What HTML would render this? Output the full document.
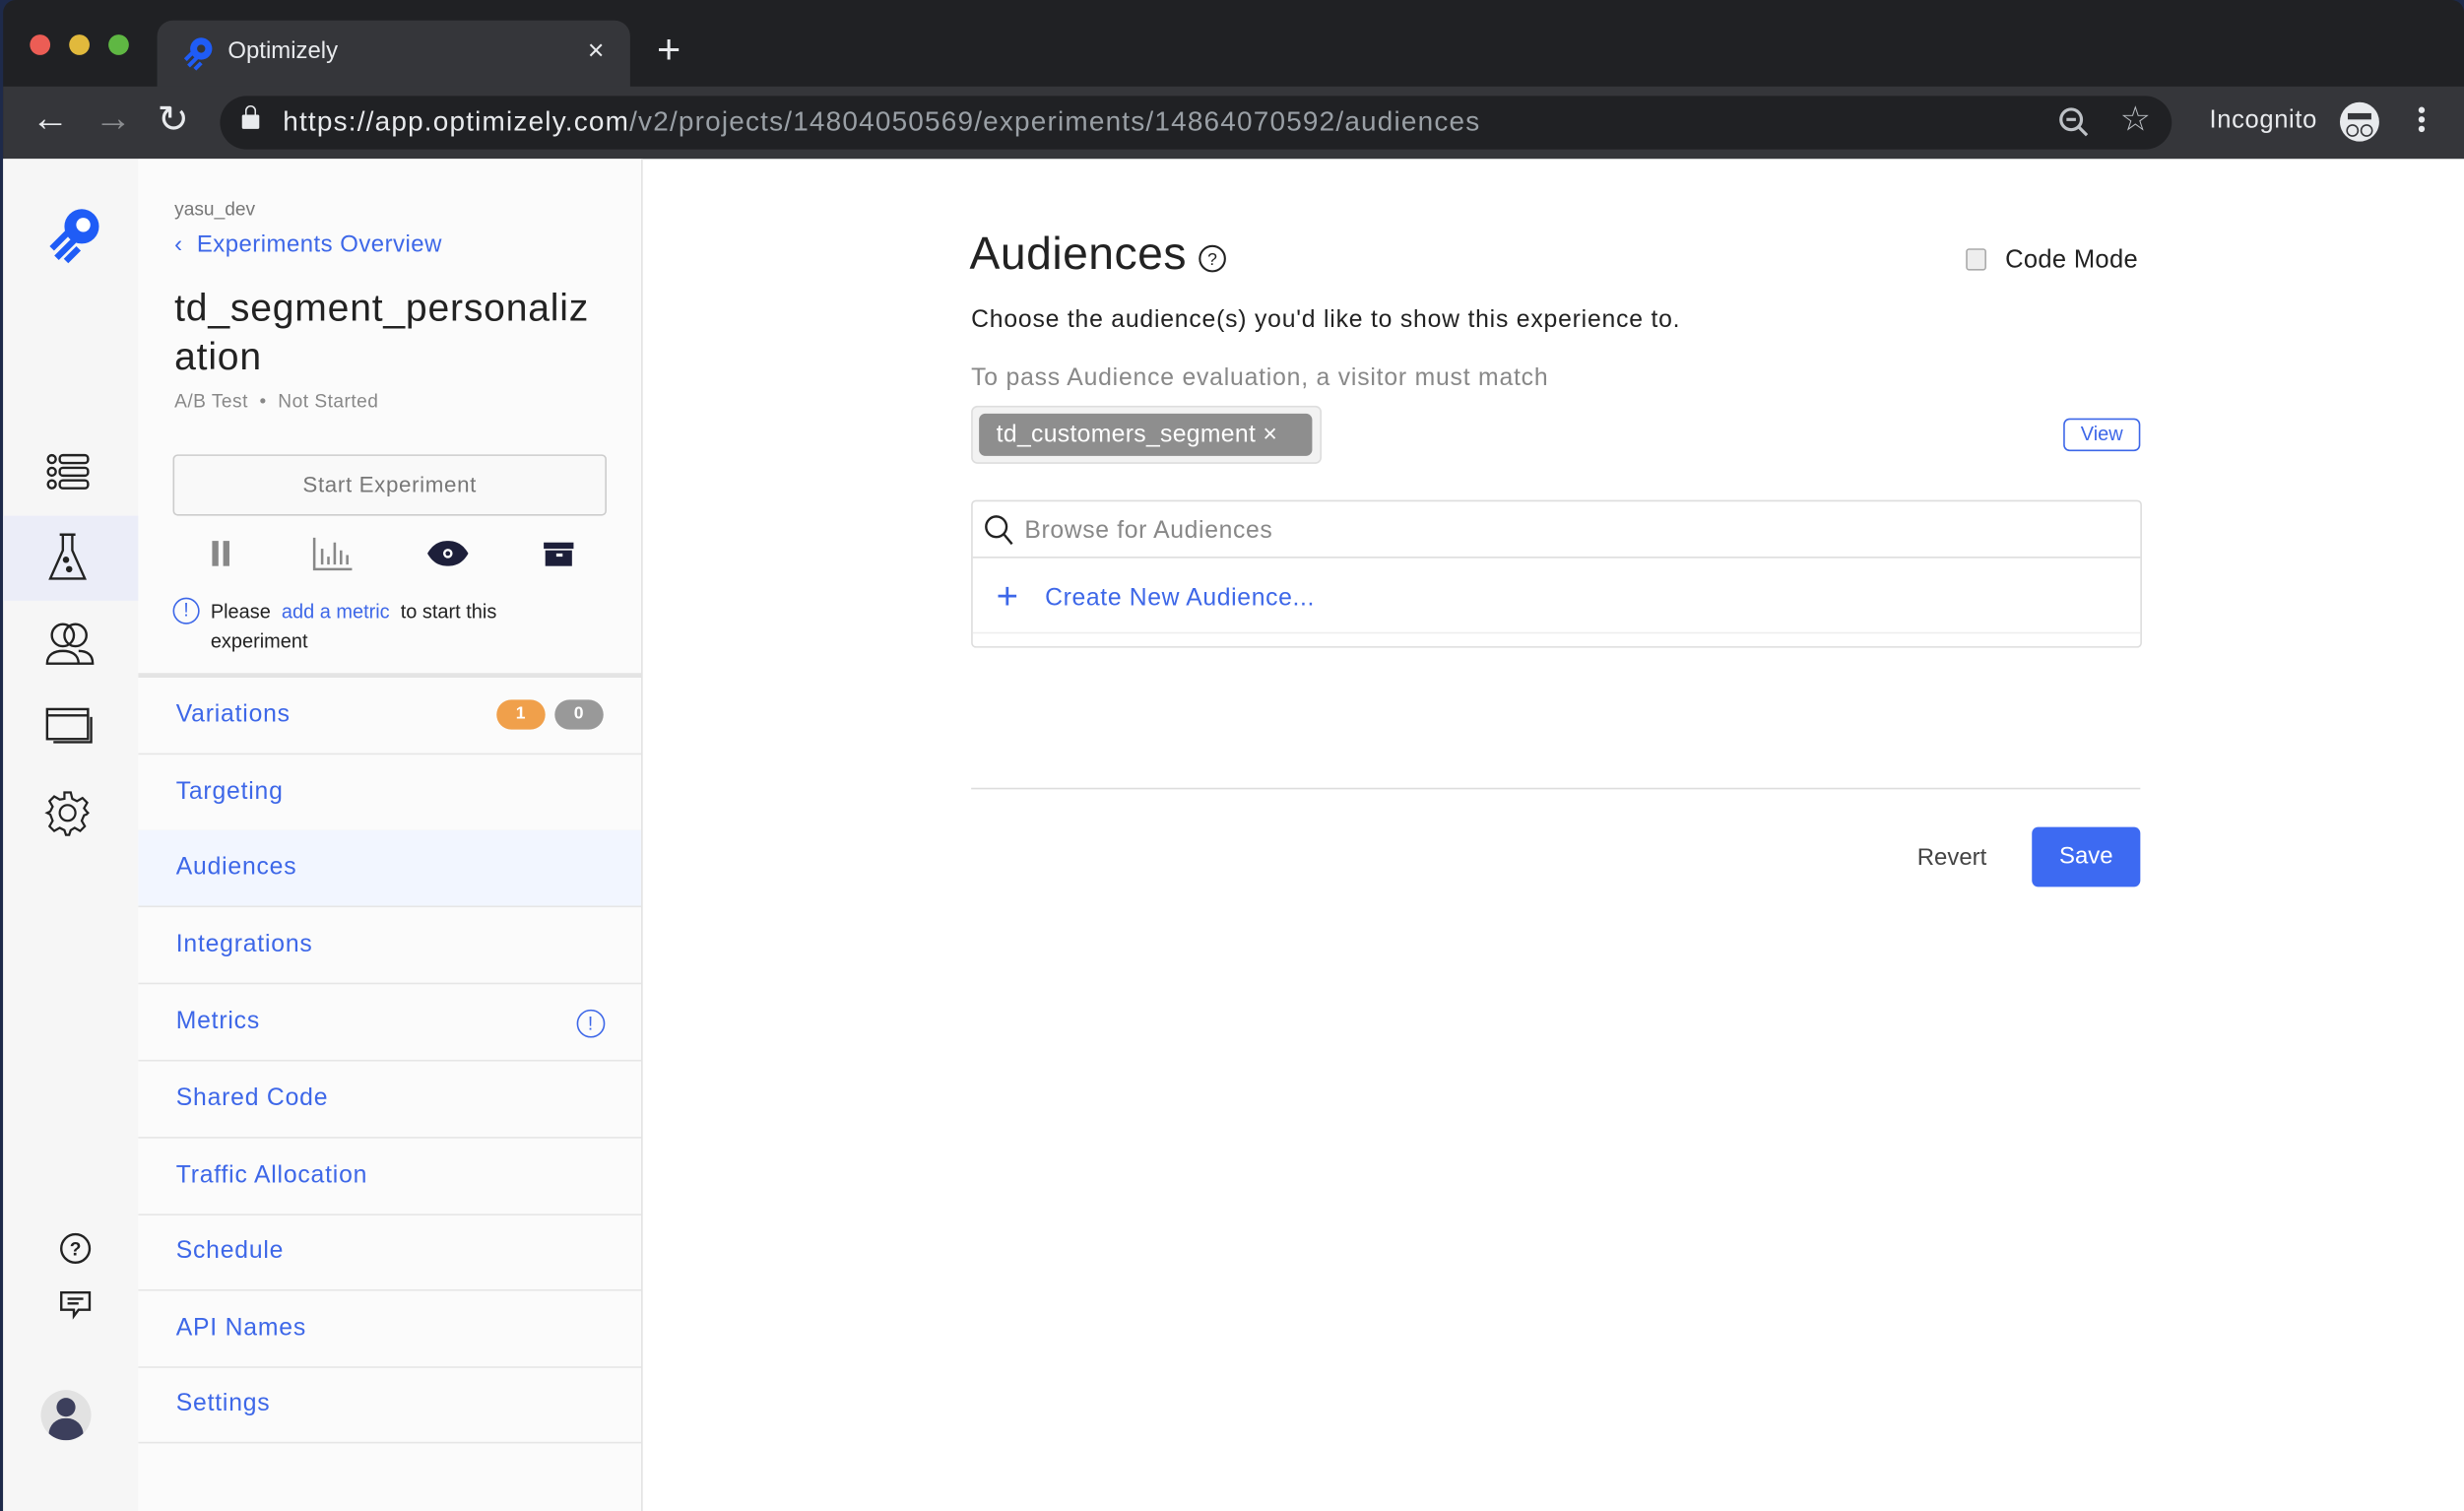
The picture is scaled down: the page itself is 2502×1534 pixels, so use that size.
<!DOCTYPE html>
<html><head><meta charset="utf-8"><style>
html,body{margin:0;padding:0;width:2502px;height:1534px;overflow:hidden;background:#1e2a4a}
#w{position:absolute;left:0;top:0;width:1568px;height:961px;transform:scale(1.5957,1.5963);transform-origin:0 0;font-family:"Liberation Sans",sans-serif}
.a{position:absolute}
.nav{position:absolute;left:88px;width:320px;height:48px;border-bottom:1px solid #e6e6e6;font-size:15.5px;color:#3d67e8;letter-spacing:.5px}
.nav span{position:absolute;left:24px;top:15px}
</style></head><body><div id="w">
<div class="a" style="left:2px;top:0;width:1566px;height:961px;background:#202124;border-radius:8px 8px 0 0"></div>
<div class="a" style="left:19px;top:22px;width:13px;height:13px;border-radius:50%;background:#ec5d55"></div>
<div class="a" style="left:44px;top:22px;width:13px;height:13px;border-radius:50%;background:#e1b93c"></div>
<div class="a" style="left:69px;top:22px;width:13px;height:13px;border-radius:50%;background:#5fb743"></div>
<div class="a" style="left:100px;top:13px;width:301px;height:43px;background:#35363a;border-radius:10px 10px 0 0"></div>
<svg class="a" style="left:114px;top:22px" width="24" height="24" viewBox="0 0 24 24"><circle cx="14" cy="9" r="7" fill="#1f5cf6"/><circle cx="14" cy="9" r="2.6" fill="#35363a"/><path d="M4 16l6-6M6 20l6-6M10 22l4-4" stroke="#1f5cf6" stroke-width="2.5"/></svg>
<div class="a" style="left:145px;top:24px;color:#e8eaed;font-size:15px">Optimizely</div>
<div class="a" style="left:374px;top:22px;color:#e8eaed;font-size:18px">×</div>
<div class="a" style="left:418px;top:16px;color:#e8eaed;font-size:26px;font-weight:300">+</div>
<div class="a" style="left:2px;top:55px;width:1566px;height:46px;background:#35363a"></div>
<div class="a" style="left:20px;top:62px;color:#e8eaed;font-size:24px">←</div>
<div class="a" style="left:60px;top:62px;color:#8a8c8f;font-size:24px">→</div>
<div class="a" style="left:100px;top:62px;color:#e8eaed;font-size:24px">↻</div>
<div class="a" style="left:140px;top:61px;width:1242px;height:34px;background:#202124;border-radius:17px"></div>
<div class="a" style="left:154px;top:73px;width:11px;height:9px;background:#e8eaed;border-radius:1px"></div>
<div class="a" style="left:156px;top:67px;width:5px;height:6px;border:1.5px solid #e8eaed;border-bottom:none;border-radius:4px 4px 0 0"></div>
<div class="a" style="left:180px;top:67px;font-size:17.5px;letter-spacing:.75px;color:#e8eaed;white-space:nowrap">https://app.optimizely.com<span style="color:#9aa0a6">/v2/projects/14804050569/experiments/14864070592/audiences</span></div>
<svg class="a" style="left:1309px;top:67px" width="22" height="22" viewBox="0 0 22 22"><circle cx="9" cy="9" r="6.5" fill="none" stroke="#bdc1c6" stroke-width="2"/><path d="M6 9h6M14 14l5 5" stroke="#bdc1c6" stroke-width="2"/></svg>
<div class="a" style="left:1349px;top:63px;color:#bdc1c6;font-size:22px">☆</div>
<div class="a" style="left:1406px;top:68px;color:#e8eaed;font-size:16px;letter-spacing:.4px">Incognito</div>
<div class="a" style="left:1489px;top:65px;width:25px;height:25px;border-radius:50%;background:#e8eaed"></div>
<div class="a" style="left:1494px;top:72px;width:15px;height:4px;background:#35363a"></div>
<div class="a" style="left:1493px;top:79px;width:6px;height:6px;border:1.5px solid #35363a;border-radius:50%"></div>
<div class="a" style="left:1502px;top:79px;width:6px;height:6px;border:1.5px solid #35363a;border-radius:50%"></div>
<div class="a" style="left:1539px;top:68px;width:4px;height:4px;border-radius:50%;background:#e8eaed;box-shadow:0 6px 0 #e8eaed,0 12px 0 #e8eaed"></div>
<div class="a" style="left:2px;top:101px;width:1566px;height:860px;background:#fff"></div>
<div class="a" style="left:2px;top:101px;width:86px;height:860px;background:#f6f6f6"></div>
<div class="a" style="left:2px;top:328px;width:86px;height:54px;background:#ebedf8"></div>
<div class="a" style="left:88px;top:101px;width:320px;height:860px;background:#fbfbfb;border-right:1px solid #e2e2e2"></div>
<svg class="a" style="left:28px;top:128px" width="40" height="40" viewBox="0 0 40 40"><circle cx="24" cy="16" r="11" fill="#1f5cf6"/><circle cx="25" cy="15" r="4.5" fill="#fff"/><path d="M5 30l10-10M8 36l11-11M14 38l8-8" stroke="#1f5cf6" stroke-width="4"/></svg>
<svg class="a" style="left:28px;top:286px" width="30" height="30" viewBox="0 0 30 30" fill="none" stroke="#222" stroke-width="1.5"><circle cx="5" cy="6" r="2.5"/><circle cx="5" cy="14" r="2.5"/><circle cx="5" cy="22" r="2.5"/><rect x="10" y="3.5" width="18" height="5" rx="2"/><rect x="10" y="11.5" width="18" height="5" rx="2"/><rect x="10" y="19.5" width="18" height="5" rx="2"/></svg>
<svg class="a" style="left:30px;top:338px" width="26" height="34" viewBox="0 0 26 34" fill="none" stroke="#222" stroke-width="1.5"><path d="M8 2h10M10 2v10L2 30h22L16 12V2"/><circle cx="12" cy="18" r="1.3" fill="#222"/><circle cx="14" cy="24" r="1.3" fill="#222"/></svg>
<svg class="a" style="left:28px;top:394px" width="32" height="30" viewBox="0 0 32 30" fill="none" stroke="#222" stroke-width="1.5"><circle cx="12" cy="10" r="7"/><circle cx="20" cy="10" r="7"/><path d="M2 28c0-6 5-8 10-8s10 2 10 8zM22 20c5 0 9 2 9 8h-9"/></svg>
<svg class="a" style="left:28px;top:448px" width="32" height="26" viewBox="0 0 32 26" fill="none" stroke="#222" stroke-width="1.5"><rect x="2" y="3" width="26" height="19"/><path d="M2 7h26M30 8v16H6"/></svg>
<svg class="a" style="left:28px;top:502px" width="30" height="30" viewBox="0 0 30 30" fill="none" stroke="#222" stroke-width="1.4"><circle cx="15" cy="15" r="5"/><path d="M13 2h4l1 4 3 1.5 3.5-2 3 3-2 3.5L27 14l1 1v0l-1 1-1.5 0.5L24 20l2 3.5-3 3-3.5-2L17 26l-1 3h-2l-1-3-3-1.5-3.5 2-3-3 2-3.5L4 16l-2-1 2-1 1.5-3-2-3.5 3-3 3.5 2L13 6z"/></svg>
<svg class="a" style="left:37px;top:783px" width="22" height="22" viewBox="0 0 22 22"><circle cx="11" cy="11" r="9" fill="none" stroke="#222" stroke-width="1.5"/><text x="11" y="15.5" text-anchor="middle" font-size="12" font-weight="bold" font-family="Liberation Sans" fill="#222">?</text></svg>
<svg class="a" style="left:37px;top:820px" width="22" height="20" viewBox="0 0 22 20" fill="none" stroke="#222" stroke-width="1.5"><path d="M2 2h18v11H13l-3 4v-4H2z"/><path d="M6 6h10M6 9h7"/></svg>
<div class="a" style="left:26px;top:884px;width:32px;height:32px;border-radius:50%;background:#e2e2e2;overflow:hidden"><div class="a" style="left:10px;top:5px;width:12px;height:12px;border-radius:50%;background:#3c3f5c"></div><div class="a" style="left:5px;top:18px;width:22px;height:14px;border-radius:11px 11px 4px 4px;background:#3c3f5c"></div></div>
<div class="a" style="left:111px;top:126px;font-size:12px;color:#777">yasu_dev</div>
<div class="a" style="left:111px;top:147px;font-size:15px;color:#3d67e8;letter-spacing:.3px">‹&nbsp; Experiments Overview</div>
<div class="a" style="left:111px;top:181px;font-size:24.5px;color:#222;line-height:31px;width:300px;letter-spacing:.5px">td_segment_personaliz<br>ation</div>
<div class="a" style="left:111px;top:248px;font-size:12px;color:#888;letter-spacing:.3px">A/B Test &nbsp;•&nbsp; Not Started</div>
<div class="a" style="left:110px;top:289px;width:274px;height:37px;border:1px solid #ccc;border-radius:3px;background:#f9f9f9;text-align:center;line-height:37px;font-size:14px;color:#777;letter-spacing:.4px">Start Experiment</div>
<div class="a" style="left:135px;top:344px;width:4px;height:16px;background:#888;box-shadow:7px 0 0 #888"></div>
<svg class="a" style="left:198px;top:341px" width="28" height="22" viewBox="0 0 28 22" fill="none" stroke="#888" stroke-width="1.6"><path d="M2 1v20h24M7 8v10M11 13v5M15 4v14M19 9v9M23 12v6"/></svg>
<svg class="a" style="left:271px;top:343px" width="28" height="18" viewBox="0 0 28 18"><path d="M1 9C5 2 10 1 14 1s9 1 13 8c-4 7-9 8-13 8S5 16 1 9z" fill="#1d1f3a"/><circle cx="14" cy="9" r="3" fill="#fff"/><circle cx="14" cy="9" r="1.5" fill="#1d1f3a"/></svg>
<div class="a" style="left:346px;top:345px;width:19px;height:4px;background:#1d1f3a"></div>
<div class="a" style="left:347px;top:350px;width:17px;height:10px;background:#1d1f3a"></div>
<div class="a" style="left:354px;top:352px;width:4px;height:1.5px;background:#fff"></div>
<div class="a" style="left:110px;top:380px;width:15px;height:15px;border:1.3px solid #3d67e8;border-radius:50%;color:#3d67e8;font-size:12px;text-align:center;line-height:15px">!</div>
<div class="a" style="left:134px;top:380px;font-size:12.5px;color:#222;line-height:19px">Please &nbsp;<span style="color:#3d67e8">add a metric</span>&nbsp; to start this<br>experiment</div>
<div class="a" style="left:88px;top:428px;width:320px;height:3px;background:#e4e4e4"></div>
<div class="nav" style="top:431px"><span>Variations</span><div class="a" style="left:228px;top:14px;width:31px;height:19px;border-radius:10px;background:#f0a04b;color:#fff;font-size:11px;font-weight:bold;text-align:center;line-height:19px">1</div><div class="a" style="left:265px;top:14px;width:31px;height:19px;border-radius:10px;background:#999;color:#fff;font-size:11px;font-weight:bold;text-align:center;line-height:19px">0</div></div>
<div class="nav" style="top:480px"><span>Targeting</span></div>
<div class="nav" style="top:528px;background:#f2f6ff"><span>Audiences</span></div>
<div class="nav" style="top:577px"><span>Integrations</span></div>
<div class="nav" style="top:626px"><span>Metrics</span><div class="a" style="left:279px;top:16px;width:16px;height:16px;border:1.3px solid #3d67e8;border-radius:50%;font-size:12px;text-align:center;line-height:16px">!</div></div>
<div class="nav" style="top:675px"><span>Shared Code</span></div>
<div class="nav" style="top:724px"><span>Traffic Allocation</span></div>
<div class="nav" style="top:772px"><span>Schedule</span></div>
<div class="nav" style="top:821px"><span>API Names</span></div>
<div class="nav" style="top:869px"><span>Settings</span></div>
<div class="a" style="left:617px;top:146px;font-size:29px;color:#222;font-weight:300;letter-spacing:.3px">Audiences</div>
<svg class="a" style="left:762px;top:155px" width="19" height="19" viewBox="0 0 19 19"><circle cx="9.5" cy="9.5" r="8" fill="none" stroke="#222" stroke-width="1.3"/><text x="9.5" y="13.5" text-anchor="middle" font-size="11" font-family="Liberation Sans" fill="#222">?</text></svg>
<div class="a" style="left:1251px;top:158px;width:11px;height:12px;border:1px solid #aaa;border-radius:2px;background:#eee"></div>
<div class="a" style="left:1276px;top:157px;font-size:16px;color:#222;letter-spacing:.2px">Code Mode</div>
<div class="a" style="left:618px;top:195px;font-size:15.5px;color:#222;letter-spacing:.5px">Choose the audience(s) you'd like to show this experience to.</div>
<div class="a" style="left:618px;top:232px;font-size:15.5px;color:#888;letter-spacing:.5px">To pass Audience evaluation, a visitor must match</div>
<div class="a" style="left:618px;top:258px;width:221px;height:35px;border:1px solid #ddd;border-radius:4px;background:#f2f2f2"></div>
<div class="a" style="left:623px;top:263px;width:212px;height:27px;border-radius:4px;background:#8e8e8e;color:#fff;font-size:15.5px;line-height:27px;padding-left:11px;box-sizing:border-box;letter-spacing:.2px">td_customers_segment <span style="font-weight:300">×</span></div>
<div class="a" style="left:1313px;top:266px;width:47px;height:19px;border:1.3px solid #3d67e8;border-radius:4px;color:#3d67e8;font-size:12.5px;text-align:center;line-height:19px">View</div>
<div class="a" style="left:618px;top:318px;width:743px;height:92px;border:1px solid #ddd;border-radius:3px"></div>
<div class="a" style="left:619px;top:354px;width:743px;height:1px;background:#ddd"></div>
<div class="a" style="left:619px;top:402px;width:743px;height:1px;background:#eee"></div>
<svg class="a" style="left:626px;top:327px" width="20" height="20" viewBox="0 0 20 20" fill="none" stroke="#222" stroke-width="1.5"><circle cx="8" cy="8" r="6.5"/><path d="M13 13l5 6"/></svg>
<div class="a" style="left:652px;top:329px;font-size:15.5px;color:#888;letter-spacing:.4px">Browse for Audiences</div>
<div class="a" style="left:634px;top:368px;font-size:24px;color:#3d67e8;font-weight:300;line-height:24px">+</div>
<div class="a" style="left:665px;top:372px;font-size:15.5px;color:#3d67e8;letter-spacing:.4px">Create New Audience...</div>
<div class="a" style="left:618px;top:501px;width:744px;height:1px;background:#ddd"></div>
<div class="a" style="left:1220px;top:537px;font-size:15px;color:#444">Revert</div>
<div class="a" style="left:1293px;top:526px;width:69px;height:38px;border-radius:4px;background:#3d6af2;color:#fff;font-size:15px;text-align:center;line-height:38px">Save</div>
</div></body></html>
